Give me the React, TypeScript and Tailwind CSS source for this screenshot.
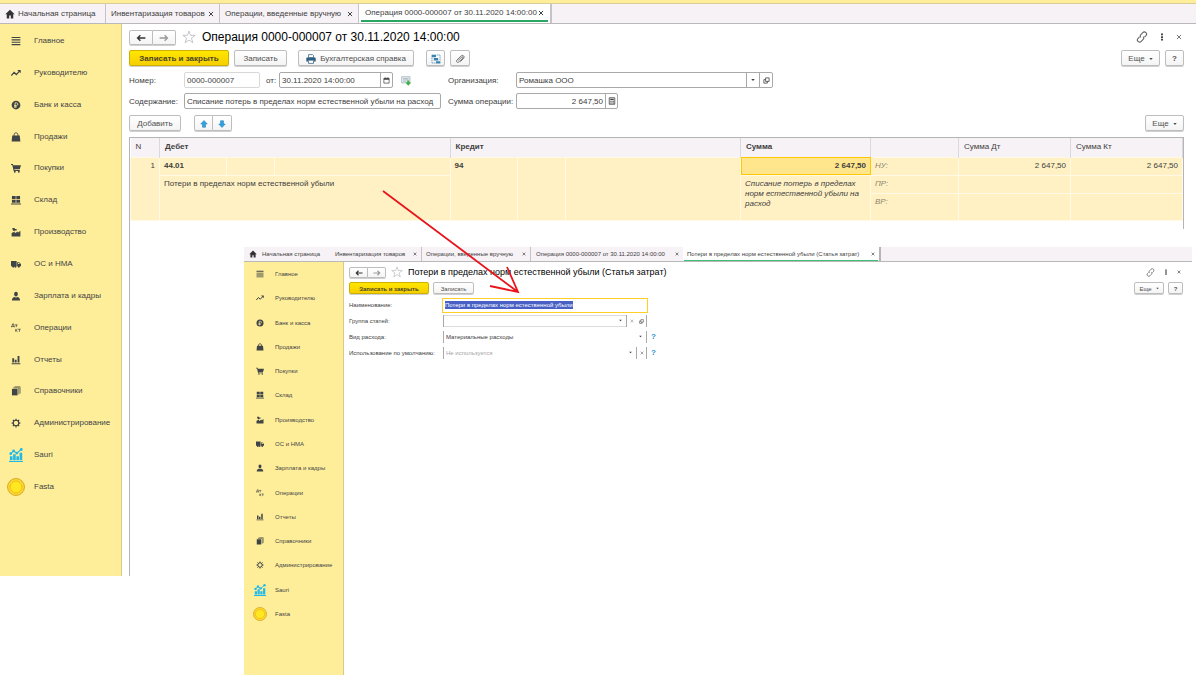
import React from 'react';
import clsx from 'clsx';

type IconProps = { className?: string };

const Svg = ({ className, children }: { className?: string; children: React.ReactNode }) => (
  <svg viewBox="0 0 16 16" className={clsx('shrink-0', className)} fill="currentColor" aria-hidden="true">
    {children}
  </svg>
);

const HomeIcon = ({ className }: IconProps) => (
  <Svg className={className}>
    <path d="M8 1 0.5 8.5h2.3V15h3.9v-4.600h2.600V15h3.900V8.500h2.300z" />
  </Svg>
);

const StarIcon = ({ className }: IconProps) => (
  <Svg className={className}>
    <path
      d="M8 1.200 9.700 6.100h5.300l-4.200 3.200 1.600 5.200L8 11.500l-4.400 3 1.600-5.200L1 6.100h5.300z"
      fill="none"
      stroke="#b4b8bd"
      strokeWidth="0.9"
    />
  </Svg>
);

const LinkIcon = ({ className }: IconProps) => (
  <Svg className={className}>
    <g fill="none" stroke="#666" strokeWidth="1.500">
      <path d="M6.500 8.500c-1.200-1.200-1.200-2.600 0-3.800L9 2.200c1.300-1.300 3-1.300 4.200-.1s1.200 2.900 0 4.200l-1.900 1.900" />
      <path d="M9.500 7.500c1.200 1.200 1.200 2.600 0 3.800L7 13.800c-1.300 1.300-3 1.300-4.200.1s-1.200-2.900 0-4.200l1.900-1.900" />
    </g>
  </Svg>
);

const DotsIcon = ({ className }: IconProps) => (
  <Svg className={className}>
    <path d="M6 1h4v3.500H6zM6 6.300h4v3.500H6zM6 11.600h4v3.500H6z" />
  </Svg>
);

const CrossIcon = ({ className }: IconProps) => (
  <Svg className={className}>
    <path d="m2.500 2.500 11 11m0-11-11 11" fill="none" stroke="currentColor" strokeWidth="2.600" />
  </Svg>
);

const ArrowIcon = ({ className }: IconProps) => (
  <Svg className={className}>
    <path d="M15 8H2.500M7 3.500 2.500 8 7 12.500" fill="none" stroke="currentColor" strokeWidth="2.200" />
  </Svg>
);

const CaretIcon = ({ className }: IconProps) => (
  <Svg className={className}>
    <path d="M1 4h14l-7 8z" />
  </Svg>
);

const PrinterIcon = ({ className }: IconProps) => (
  <Svg className={className}>
    <path d="M4 1h6.500L12 2.500V6H4z" fill="#fff" stroke="#2f607f" strokeWidth="1.200" />
    <path d="M1.500 5.500h13c.6 0 1 .4 1 1V12h-3V9.500h-9V12h-3V6.500c0-.6.400-1 1-1z" fill="#2f607f" />
    <path d="M4 10h8v5H4z" fill="#fff" stroke="#2f607f" strokeWidth="1.200" />
  </Svg>
);

const StructureIcon = ({ className }: IconProps) => (
  <Svg className={className}>
    <path d="M1 1h7v4H1zM4.500 6.500h7v4h-7zM8 11.500h7V15H8z" fill="#3b83ad" />
    <path d="M1.500 6v8.500H7M9 1.500h5.500V10" fill="none" stroke="#3b83ad" strokeWidth="1.200" strokeDasharray="2 1" />
  </Svg>
);

const ClipIcon = ({ className }: IconProps) => (
  <Svg className={className}>
    <path
      d="m5 10.500 5.500-5.500c1.600-1.500 3.300.200 1.800 1.700L6.500 12.500c-2.600 2.500-5.600-.5-3.100-3.100l5.800-5.900c3.400-3.300 7.400.600 4.100 4L8.500 12.300"
      fill="none"
      stroke="#555"
      strokeWidth="1.300"
    />
  </Svg>
);

const CalendarIcon = ({ className }: IconProps) => (
  <Svg className={className}>
    <path d="M2 3h12v11H2z" fill="none" stroke="currentColor" strokeWidth="1.600" />
    <path d="M2 3h12v3.500H2zM4 1h2v3H4zM10 1h2v3h-2z" />
  </Svg>
);

const CalculatorIcon = ({ className }: IconProps) => (
  <Svg className={className}>
    <path d="M2.500 1.500h11v13h-11z" fill="none" stroke="currentColor" strokeWidth="1.600" />
    <path d="M4.500 3.500h7v2.500h-7zM4.500 7.500h2v2h-2zM7.200 7.500h2v2h-2zM9.900 7.500h2v2h-2zM4.500 11h2v2h-2zM7.200 11h2v2h-2zM9.900 11h2v2h-2z" />
  </Svg>
);

const OpenIcon = ({ className }: IconProps) => (
  <Svg className={className}>
    <path d="M6 2h8v8H6z M6 6H2v8h8v-4" fill="none" stroke="currentColor" strokeWidth="1.800" />
  </Svg>
);

const PostedIcon = ({ className }: IconProps) => (
  <Svg className={className}>
    <path d="M1 2.500h12v9H1z" fill="#eef3f5" stroke="#93a5ad" />
    <path d="M3 5h8M3 7h8M3 9h5" stroke="#93a5ad" />
    <path d="M9 8h3v3h3l-4.500 4.500L6.500 11H9z" fill="#3fae49" />
  </Svg>
);

const MoveIcon = ({ className }: IconProps) => (
  <Svg className={className}>
    <path d="m8 1 6.500 7H11v6.500H5V8H1.500z" fill="#2fa4e4" stroke="#1c76ad" />
  </Svg>
);

const DtKtIcon = ({ className }: IconProps) => (
  <Svg className={className}>
    <g fill="none" stroke="currentColor" strokeWidth="1.200">
      <path d="M.5 7V5.500h5V7M1.500 5.500 2.500 1.500h2v4M6.500 3h4M8.500 3v3.500" />
      <path d="M7.500 9.500V14M10.500 9.500 8 11.700l2.500 2.300M11.500 10h4M13.500 10v4" />
    </g>
  </Svg>
);

const SECTIONS = [
  { name: 'Главное', icon: <path d="M1 1.500h14v1.800H1zM1 5.300h14v1.800H1zM1 9.100h14v1.800H1zM1 12.900h14v1.800H1z" /> },
  {
    name: 'Руководителю',
    icon: (
      <>
        <path d="m.5 12 4.500-5 3.500 3.500L14 4.500" fill="none" stroke="currentColor" strokeWidth="2" />
        <path d="M10 3h5.500v5.500z" />
      </>
    ),
  },
  {
    name: 'Банк и касса',
    icon: (
      <>
        <circle cx="8" cy="8" r="7" />
        <path d="M6.500 13V4.500h2.300c3 0 3 4.200 0 4.200H5M5 11h4.500" fill="none" stroke="#ffee99" strokeWidth="1.300" />
      </>
    ),
  },
  {
    name: 'Продажи',
    icon: (
      <>
        <path d="M2 5.500h12l1 9.500H1z" />
        <path d="M5 8V4c0-3.500 6-3.500 6 0v4" fill="none" stroke="currentColor" strokeWidth="1.500" />
      </>
    ),
  },
  {
    name: 'Покупки',
    icon: (
      <>
        <path d="M0 1.500h3l.8 2H16l-2 6.500H5.200l.4 1.200H14v1.500H4.300L2 3H0z" />
        <circle cx="6" cy="14" r="1.500" />
        <circle cx="12.500" cy="14" r="1.500" />
      </>
    ),
  },
  { name: 'Склад', icon: <path d="M1.500 1.500h6v5h-6zM8.500 1.500h6v5h-6zM1.500 7.500h6v5h-6zM8.500 7.500h6v5h-6zM0 13.500h16V15H0z" /> },
  {
    name: 'Производство',
    icon: <path d="M1 15V9.500L6 7v3l5-3v2l4-3v9zM2 1.500h4V3h3v2.500H6.500L5 6.500 3 5.500z" />,
  },
  {
    name: 'ОС и НМА',
    icon: (
      <>
        <path d="M0 3h9v8.500H0zM9.800 5H13l3 3v3.500H9.800z" />
        <circle cx="3.500" cy="12" r="1.800" />
        <circle cx="7" cy="12" r="1.800" />
        <circle cx="12.500" cy="12" r="1.800" />
        <path d="M11.300 6.200h1.300L14.300 8h-3z" fill="#ffee99" />
      </>
    ),
  },
  {
    name: 'Зарплата и кадры',
    icon: <path d="M8 1c4.200 0 3.700 7.200 0 7.800C4.300 8.200 3.800 1 8 1zM1.500 15c0-4 2-5 4.500-5.500l2 1.200 2-1.200c2.500.5 4.500 1.500 4.500 5.500z" />,
  },
  { name: 'Операции', icon: null },
  { name: 'Отчеты', icon: <path d="M2 5h3v7H2zM6 7.500h3V12H6zM10.500 1.500h3V12h-3zM1 13h14v1.700H1z" /> },
  {
    name: 'Справочники',
    icon: (
      <>
        <path d="M1.500 4.500h9V15h-9z" />
        <path d="M3.500 3h9v10.500M5.500 1.300h9V12" fill="none" stroke="currentColor" strokeWidth="1.100" />
      </>
    ),
  },
  {
    name: 'Администрирование',
    icon: (
      <>
        <circle cx="8" cy="8" r="4.400" fill="none" stroke="currentColor" strokeWidth="1.800" />
        <path
          d="M8 1v3M8 12v3M1 8h3M12 8h3M3 3l2.200 2.200M10.800 10.800 13 13M13 3l-2.200 2.200M5.200 10.800 3 13"
          stroke="currentColor"
          strokeWidth="2"
        />
      </>
    ),
  },
  {
    name: 'Sauri',
    large: true,
    icon: (
      <g fill="#1fb9ea">
        <path d="M1 9.500h3V14H1zM4.700 7h3v7h-3zM8.400 9.500h3V14h-3zM12.100 5.500h3V14h-3zM0 14.800h16v1.200H0z" />
        <path d="m2 6.500 3.300-3 3.700 2.500L14 1.500" fill="none" stroke="#1fb9ea" strokeWidth="1.300" />
        <circle cx="2" cy="6.500" r="1.600" />
        <circle cx="5.300" cy="3.300" r="1.600" />
        <circle cx="9" cy="5.800" r="1.600" />
        <circle cx="14" cy="1.700" r="1.600" />
      </g>
    ),
  },
  {
    name: 'Fasta',
    coin: true,
    icon: (
      <>
        <circle cx="8" cy="8" r="7.500" fill="#ffd92e" stroke="#d0a021" strokeWidth="0.800" />
        <circle cx="8" cy="8" r="5.300" fill="#ffe81f" stroke="#f0b323" strokeWidth="0.800" />
      </>
    ),
  },
];

const Sidebar = ({ compact }: { compact?: boolean }) => (
  <nav
    className={clsx(
      'shrink-0 border-r border-[#d9c983] bg-[#ffee99] text-[#3f4447]',
      compact ? 'w-[100px] pb-[49px]' : 'w-[122px] pt-px pb-[73px]'
    )}
  >
    <ul className={clsx('grid auto-rows-fr', compact ? 'h-[364px]' : 'h-[478px]')}>
      {SECTIONS.map(({ name, icon, large, coin }) => {
        const size = compact
          ? coin ? 'size-[14px]' : large ? 'size-3' : 'size-2'
          : coin ? 'size-[18px]' : large ? 'size-[14px]' : 'size-[10px]';
        return (
          <li key={name} className="flex items-center">
            <a href="#" className={clsx('flex items-center whitespace-nowrap', !compact && 'gap-[3px]')}>
              <span className="flex w-[31px] justify-center">
                {icon ? <Svg className={size}>{icon}</Svg> : <DtKtIcon className={size} />}
              </span>
              {name}
            </a>
          </li>
        );
      })}
    </ul>
  </nav>
);

type ButtonProps = React.ButtonHTMLAttributes<HTMLButtonElement> & { primary?: boolean };

const Button = ({ primary, className, children, ...rest }: ButtonProps) => (
  <button
    className={clsx(
      'flex shrink-0 items-center justify-center whitespace-nowrap rounded-[2px] border pt-px shadow-[0_1px_0_#d0d0d0]',
      primary
        ? 'border-[#cdb000] bg-linear-to-b from-[#ffe600] to-[#f5cf00] font-bold text-[#4a4423]'
        : 'border-[#bdbdbd] bg-linear-to-b from-white to-[#f4f4f4] text-[#505050]',
      className
    )}
    {...rest}
  >
    {children}
  </button>
);

const MainWindow = () => (
  <div className="mr-1 text-[8px] leading-[10px]">
    <div className="h-[4px] border-b border-[#d8cd96] bg-[#ffee99]" />
    <div className="flex h-5 border-b border-[#b9b9b9] bg-[#f7f2f6] text-[#404040]">
      <button className="flex w-[106px] items-center gap-[3px] border-r border-[#c6c2c5] pl-[5px]">
        <HomeIcon className="size-[10px] text-[#333]" />
        Начальная страница
      </button>
      <button className="flex w-[114px] items-center justify-between border-r border-[#c6c2c5] px-[5px]">
        Инвентаризация товаров
        <CrossIcon className="size-[6px]" />
      </button>
      <button className="flex w-[139px] items-center justify-between border-r border-[#c6c2c5] px-[5px]">
        Операции, введенные вручную
        <CrossIcon className="size-[6px]" />
      </button>
      <div className="border-r-2 border-[#c6c2c5] bg-white px-[2px]">
        <button className="flex h-[18px] w-[187px] items-center justify-between border-b-2 border-[#2ba563] px-1 pt-px">
          Операция 0000-000007 от 30.11.2020 14:00:00
          <CrossIcon className="size-[6px]" />
        </button>
      </div>
    </div>

    <div className="flex">
      <Sidebar />
      <main className="flex min-w-0 grow flex-col pl-[7px] text-[#404040]">
        <div className="flex flex-col gap-[5px] pt-[5px] pr-3">
          <div className="flex h-4 items-center">
            <div className="flex">
              <Button className="h-[15px] w-[24px] rounded-r-none" aria-label="Назад">
                <ArrowIcon className="size-[10px] text-[#333]" />
              </Button>
              <Button className="h-[15px] w-[23px] rounded-l-none border-l-0" aria-label="Вперед">
                <ArrowIcon className="size-[10px] rotate-180 text-[#999]" />
              </Button>
            </div>
            <StarIcon className="ml-[6px] size-[14px]" />
            <h1 className="ml-[6px] text-[12px] leading-4 text-black">Операция 0000-000007 от 30.11.2020 14:00:00</h1>
            <div className="ml-auto flex items-center gap-[10px] pr-[2px]">
              <button aria-label="Ссылка"><LinkIcon className="size-3" /></button>
              <button aria-label="Меню"><DotsIcon className="size-2 text-[#444]" /></button>
              <button aria-label="Закрыть"><CrossIcon className="size-[6px] text-[#777]" /></button>
            </div>
          </div>

          <div className="flex h-4">
            <Button primary className="w-[100px]">Записать и закрыть</Button>
            <Button className="ml-[5px] w-[53px]">Записать</Button>
            <Button className="ml-[11px] w-[116px] gap-1">
              <PrinterIcon className="size-[10px]" />
              Бухгалтерская справка
            </Button>
            <Button className="ml-[12px] w-[19px]" aria-label="Структура подчиненности">
              <StructureIcon className="size-[10px]" />
            </Button>
            <Button className="ml-[5px] w-5" aria-label="Присоединенные файлы">
              <ClipIcon className="size-[10px]" />
            </Button>
            <Button className="ml-auto w-[39px] gap-1">Еще <CaretIcon className="size-1" /></Button>
            <Button className="ml-[5px] w-[19px] font-bold">?</Button>
          </div>

          <div className="mt-px flex h-4 items-center">
            <label htmlFor="number" className="w-[55px] pt-px">Номер:</label>
            <input id="number" defaultValue="0000-000007" className="h-4 w-[76px] rounded-[2px] border border-[#d8d8d8] px-[2px]" />
            <label htmlFor="date" className="w-[19px] pt-px pl-[6px]">от:</label>
            <div className="flex h-4 w-[114px] rounded-[2px] border border-[#a9a9a9]">
              <input id="date" defaultValue="30.11.2020 14:00:00" className="w-0 grow px-[2px] pt-px" />
              <button className="flex w-3 items-center justify-center border-l border-[#a9a9a9]" aria-label="Выбрать дату">
                <CalendarIcon className="size-[7px]" />
              </button>
            </div>
            <PostedIcon className="ml-2 size-[11px]" />
            <label htmlFor="org" className="ml-[36px] w-[68px] pt-px">Организация:</label>
            <div className="flex h-4 w-[257px] rounded-[2px] border border-[#a9a9a9]">
              <div className="relative grow">
                <select id="org" className="h-full w-full appearance-none px-[2px] pt-px">
                  <option>Ромашка ООО</option>
                </select>
                <span className="pointer-events-none absolute inset-y-0 right-0 flex w-[13px] items-center justify-center border-l border-[#a9a9a9]">
                  <CaretIcon className="size-1" />
                </span>
              </div>
              <button className="flex w-[13px] items-center justify-center border-l border-[#a9a9a9]" aria-label="Открыть">
                <OpenIcon className="size-[7px]" />
              </button>
            </div>
          </div>

          <div className="flex h-4 items-center">
            <label htmlFor="content" className="w-[55px] pt-px">Содержание:</label>
            <input
              id="content"
              defaultValue="Списание потерь в пределах норм естественной убыли на расход"
              className="h-4 w-[257px] rounded-[2px] border border-[#a9a9a9] px-[2px]"
            />
            <label htmlFor="sum" className="ml-[7px] w-[68px] pt-px whitespace-nowrap">Сумма операции:</label>
            <div className="flex h-4 w-[102px] rounded-[2px] border border-[#a9a9a9]">
              <input id="sum" defaultValue="2 647,50" className="w-0 grow px-[2px] pt-px text-right" />
              <button className="flex w-3 items-center justify-center border-l border-[#a9a9a9]" aria-label="Калькулятор">
                <CalculatorIcon className="size-2" />
              </button>
            </div>
          </div>

          <div className="mt-px flex h-4">
            <Button className="w-[52px]">Добавить</Button>
            <Button className="ml-[13px] w-[19px] rounded-r-none" aria-label="Вверх">
              <MoveIcon className="size-2" />
            </Button>
            <Button className="w-[19px] rounded-l-none border-l-0" aria-label="Вниз">
              <MoveIcon className="size-2 rotate-180" />
            </Button>
            <Button className="ml-auto w-[39px] gap-1">Еще <CaretIcon className="size-1" /></Button>
          </div>
        </div>

        <div className="mt-[6px] mr-3 grow border-l border-[#b5b5b5]">
          <div className="border-t border-r border-[#b5b5b5] pb-2">
            <table className="w-full table-fixed border-collapse">
              <colgroup>
                <col className="w-[29px]" />
                <col className="w-[67px]" />
                <col className="w-[48px]" />
                <col />
                <col className="w-[67px]" />
                <col className="w-[48px]" />
                <col />
                <col className="w-[130px]" />
                <col className="w-[88px]" />
                <col className="w-[112px]" />
                <col className="w-[112px]" />
              </colgroup>
              <thead>
                <tr className="h-[19px] border-b border-[#d5d5d5] bg-[#f7f2f6] text-left [&>th]:border-r [&>th]:border-[#d9dade] [&>th]:px-[5px]">
                  <th className="font-normal">N</th>
                  <th colSpan={3}>Дебет</th>
                  <th colSpan={3}>Кредит</th>
                  <th>Сумма</th>
                  <th />
                  <th className="font-normal">Сумма Дт</th>
                  <th className="font-normal">Сумма Кт</th>
                </tr>
              </thead>
              <tbody className="bg-[#fff1c4] [&_td]:border [&_td]:border-[#fff9e6] [&_td]:px-1">
                <tr className="h-[18px]">
                  <td rowSpan={3} className="pt-[3px] text-right align-top">1</td>
                  <td className="font-bold">44.01</td>
                  <td />
                  <td />
                  <td rowSpan={3} className="pt-[3px] align-top font-bold">94</td>
                  <td rowSpan={3} />
                  <td rowSpan={3} />
                  <td className="bg-[#ffe68c] text-right font-bold outline outline-offset-[-1px] outline-[#ffc800]">2 647,50</td>
                  <td className="italic text-[#8d8670]">НУ:</td>
                  <td className="text-right">2 647,50</td>
                  <td className="text-right">2 647,50</td>
                </tr>
                <tr className="h-[18px]">
                  <td colSpan={3} rowSpan={2} className="pt-[3px] align-top">Потери в пределах норм естественной убыли</td>
                  <td rowSpan={2} className="pt-[3px] align-top italic">
                    Списание потерь в пределах норм естественной убыли на расход
                  </td>
                  <td className="italic text-[#8d8670]">ПР:</td>
                  <td />
                  <td />
                </tr>
                <tr className="h-[27px]">
                  <td className="pt-[3px] align-top italic text-[#8d8670]">ВР:</td>
                  <td />
                  <td />
                </tr>
              </tbody>
            </table>
          </div>
        </div>
      </main>
    </div>
  </div>
);

const FIELD = 'flex h-3 w-[204px] border-x border-[#a9a9a9]';

const CostItemWindow = () => (
  <section className="absolute top-[247px] right-2 left-[244px] bg-white text-[6px] leading-[8px] text-[#404040]">
    <div className="flex h-[15px] border-b border-[#b9b9b9] bg-[#f7f2f6]">
      <button className="flex w-[87px] items-center gap-[5px] pl-[5px]">
        <HomeIcon className="size-2 text-[#333]" />
        Начальная страница
      </button>
      <button className="flex w-[91px] items-center justify-between border-r border-[#c6c2c5] px-1">
        Инвентаризация товаров
        <CrossIcon className="size-1" />
      </button>
      <button className="flex w-[109px] items-center justify-between border-r border-[#c6c2c5] px-1">
        Операции, введенные вручную
        <CrossIcon className="size-1" />
      </button>
      <button className="flex w-[152px] items-center justify-between pr-1 pl-[5px]">
        Операция 0000-000007 от 30.11.2020 14:00:00
        <CrossIcon className="size-1" />
      </button>
      <div className="border-r-2 border-[#b5b5b5] bg-white px-px">
        <button className="flex h-[14px] w-[194px] items-center justify-between border-b border-[#3cbf78] px-[3px]">
          Потери в пределах норм естественной убыли (Статья затрат)
          <CrossIcon className="size-1" />
        </button>
      </div>
    </div>

    <div className="flex">
      <Sidebar compact />
      <div className="grow pt-1 pr-[9px] pl-[5px]">
        <div className="flex h-3 items-center">
          <Button className="h-[11px] w-[19px] rounded-r-none" aria-label="Назад">
            <ArrowIcon className="size-2 text-[#333]" />
          </Button>
          <Button className="h-[11px] w-[18px] rounded-l-none border-l-0" aria-label="Вперед">
            <ArrowIcon className="size-2 rotate-180 text-[#999]" />
          </Button>
          <StarIcon className="ml-[5px] size-3" />
          <h2 className="ml-[5px] text-[9px] leading-3 text-black">Потери в пределах норм естественной убыли (Статья затрат)</h2>
          <div className="ml-auto flex items-center gap-2 pr-[2px]">
            <button aria-label="Ссылка"><LinkIcon className="size-[9px]" /></button>
            <button aria-label="Меню"><DotsIcon className="size-[6px]" /></button>
            <button aria-label="Закрыть"><CrossIcon className="size-1" /></button>
          </div>
        </div>

        <div className="mt-1 flex h-3">
          <Button primary className="w-20">Записать и закрыть</Button>
          <Button className="ml-1 w-[41px]">Записать</Button>
          <Button className="ml-auto w-[30px] gap-1">Еще <CaretIcon className="size-[3px]" /></Button>
          <Button className="ml-1 w-[15px] font-bold">?</Button>
        </div>

        <div className="mt-[3px] flex h-4 items-center">
          <label htmlFor="item-name" className="w-[93px]">Наименование:</label>
          <div className="flex h-[15px] w-[206px] items-center border border-[#ffcf26] px-[2px]">
            <input
              id="item-name"
              defaultValue="Потери в пределах норм естественной убыли"
              className="field-sizing-content bg-[#4860c4] text-white"
            />
          </div>
        </div>
        <div className="flex h-4 items-center">
          <label htmlFor="item-group" className="w-[94px]">Группа статей:</label>
          <div className={FIELD}>
            <div className="relative grow">
              <select id="item-group" className="h-full w-full appearance-none border-y border-[#dcdcdc] px-[2px]">
                <option />
              </select>
              <CaretIcon className="pointer-events-none absolute top-1 right-1 size-[3px]" />
            </div>
            <button className="flex w-[10px] items-center justify-center border-l border-[#a9a9a9]" aria-label="Очистить">
              <CrossIcon className="size-1 text-[#999]" />
            </button>
            <button className="flex w-[10px] items-center justify-center" aria-label="Открыть">
              <OpenIcon className="size-[5px]" />
            </button>
          </div>
        </div>
        <div className="flex h-4 items-center">
          <label htmlFor="item-kind" className="w-[94px]">Вид расхода:</label>
          <div className={FIELD}>
            <div className="relative grow">
              <select id="item-kind" className="h-full w-full appearance-none px-[2px]">
                <option>Материальные расходы</option>
              </select>
              <CaretIcon className="pointer-events-none absolute top-1 right-1 size-[3px]" />
            </div>
          </div>
          <button className="ml-1 text-[8px] font-bold text-[#2b8fd0]">?</button>
        </div>
        <div className="flex h-4 items-center">
          <label htmlFor="item-usage" className="w-[94px] whitespace-nowrap">Использование по умолчанию:</label>
          <div className={FIELD}>
            <div className="relative grow">
              <select id="item-usage" className="h-full w-full appearance-none px-[2px] text-[#a5a5a5]">
                <option>Не используется</option>
              </select>
              <CaretIcon className="pointer-events-none absolute top-1 right-1 size-[3px]" />
            </div>
            <button className="flex w-[10px] items-center justify-center border-l border-[#a9a9a9]" aria-label="Очистить">
              <CrossIcon className="size-1 text-[#777]" />
            </button>
          </div>
          <button className="ml-1 text-[8px] font-bold text-[#2b8fd0]">?</button>
        </div>
      </div>
    </div>
  </section>
);

export default function App() {
  return (
    <div className="relative min-h-screen overflow-hidden bg-white font-['Liberation_Sans',Arial,sans-serif]">
      <MainWindow />
      <CostItemWindow />
      {/* Pointer from the debit row to the opened cost item */}
      <svg
        viewBox="0 0 140 106"
        className="pointer-events-none absolute top-[189px] left-[381px] h-[106px] w-[140px]"
        fill="none"
        stroke="#e8151d"
        strokeWidth="1.800"
        aria-hidden="true"
      >
        <path d="M2 2 137 103M126 78l11 25-28-6" />
      </svg>
    </div>
  );
}
